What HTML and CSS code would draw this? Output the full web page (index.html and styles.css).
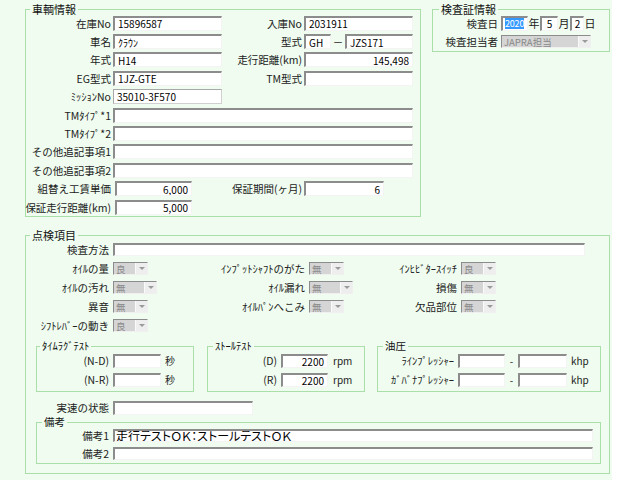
FILE: index.html
```html
<!DOCTYPE html>
<html lang="ja">
  <head>
    <meta charset="UTF-8" />
    <meta name="viewport" content="width=device-width, initial-scale=1.0" />
    <title>検査入力</title>
    <link rel="stylesheet" href="styles.css">
  </head>
  <body>
    <div class="form">
      <div class="top">
        <!-- 車輌情報 -->
        <fieldset class="grp car">
          <legend>車輌情報</legend>
          <div class="car-grid">
            <span class="lbl">在庫No</span><input class="txt" type="text" value="15896587" />
            <span class="lbl">入庫No</span><input class="txt" type="text" value="2031911" />

            <span class="lbl">車名</span><input class="txt" type="text" value="ｸﾗｳﾝ" />
            <span class="lbl">型式</span>
            <div class="pair">
              <input class="txt gh" type="text" value="GH" />
              <span class="dash">－</span>
              <input class="txt jzs" type="text" value="JZS171" />
            </div>

            <span class="lbl">年式</span><input class="txt" type="text" value="H14" />
            <span class="lbl">走行距離(km)</span><input class="txt num" type="text" value="145,498" />

            <span class="lbl">EG型式</span><input class="txt" type="text" value="1JZ-GTE" />
            <span class="lbl">TM型式</span><input class="txt" type="text" value="" />

            <span class="lbl">ﾐｯｼｮﾝNo</span><input class="txt flat" type="text" value="35010-3F570" />
            <span></span><span></span>

            <span class="lbl">TMﾀｲﾌﾟ*1</span><input class="txt wide" type="text" value="" />
            <span class="lbl">TMﾀｲﾌﾟ*2</span><input class="txt wide" type="text" value="" />
            <span class="lbl">その他追記事項1</span><input class="txt wide" type="text" value="" />
            <span class="lbl">その他追記事項2</span><input class="txt wide" type="text" value="" />

            <span class="lbl">組替え工賃単価</span><input class="txt num short" type="text" value="6,000" />
            <span class="lbl">保証期間(ヶ月)</span><input class="txt num period" type="text" value="6" />

            <span class="lbl">保証走行距離(km)</span><input class="txt num short" type="text" value="5,000" />
          </div>
        </fieldset>

        <!-- 検査証情報 -->
        <fieldset class="grp cert">
          <legend>検査証情報</legend>
          <div class="cert-grid">
            <span class="lbl">検査日</span>
            <div class="date">
              <div class="txt year"><span class="hl">2020</span></div>
              <span class="unit">年</span>
              <input class="txt month" type="text" value="5" />
              <span class="unit">月</span>
              <input class="txt day" type="text" value="2" />
              <span class="unit">日</span>
            </div>
            <span class="lbl">検査担当者</span>
            <div class="sel staff"><span class="val">JAPRA担当</span><span class="arr"></span></div>
          </div>
        </fieldset>
      </div>

      <!-- 点検項目 -->
      <fieldset class="grp check">
        <legend>点検項目</legend>
        <div class="method">
          <span class="lbl">検査方法</span><input class="txt thin" type="text" value="" />
        </div>

        <div class="checks">
          <span class="lbl">ｵｲﾙの量</span>
          <div class="cell"><div class="sel s35"><span class="val">良</span><span class="arr"></span></div></div>
          <span class="lbl">ｲﾝﾌﾟｯﾄｼｬﾌﾄのがた</span>
          <div class="cell"><div class="sel s35"><span class="val">無</span><span class="arr"></span></div></div>
          <span class="lbl">ｲﾝﾋﾋﾞﾀｰｽｲｯﾁ</span>
          <div class="cell"><div class="sel s35"><span class="val">良</span><span class="arr"></span></div></div>

          <span class="lbl">ｵｲﾙの汚れ</span>
          <div class="cell"><div class="sel s44"><span class="val">無</span><span class="arr"></span></div></div>
          <span class="lbl">ｵｲﾙ漏れ</span>
          <div class="cell"><div class="sel s44"><span class="val">無</span><span class="arr"></span></div></div>
          <span class="lbl">損傷</span>
          <div class="cell"><div class="sel s35"><span class="val">無</span><span class="arr"></span></div></div>

          <span class="lbl">異音</span>
          <div class="cell"><div class="sel s35"><span class="val">無</span><span class="arr"></span></div></div>
          <span class="lbl">ｵｲﾙﾊﾟﾝへこみ</span>
          <div class="cell"><div class="sel s35"><span class="val">無</span><span class="arr"></span></div></div>
          <span class="lbl">欠品部位</span>
          <div class="cell"><div class="sel s35"><span class="val">無</span><span class="arr"></span></div></div>

          <span class="lbl">ｼﾌﾄﾚﾊﾞｰの動き</span>
          <div class="cell"><div class="sel s35"><span class="val">良</span><span class="arr"></span></div></div>
        </div>

        <div class="tests">
          <fieldset class="grp sub lag">
            <legend>ﾀｲﾑﾗｸﾞﾃｽﾄ</legend>
            <div class="sub-grid lag-grid">
              <span class="lbl">(N-D)</span><input class="txt mid" type="text" value="" /><span class="unit-s">秒</span>
              <span class="lbl">(N-R)</span><input class="txt mid" type="text" value="" /><span class="unit-s">秒</span>
            </div>
          </fieldset>
          <fieldset class="grp sub stall">
            <legend>ｽﾄｰﾙﾃｽﾄ</legend>
            <div class="sub-grid stall-grid">
              <span class="lbl">(D)</span><input class="txt mid num" type="text" value="2200" /><span class="unit-s">rpm</span>
              <span class="lbl">(R)</span><input class="txt mid num" type="text" value="2200" /><span class="unit-s">rpm</span>
            </div>
          </fieldset>
          <fieldset class="grp sub oil">
            <legend>油圧</legend>
            <div class="sub-grid oil-grid">
              <span class="lbl">ﾗｲﾝﾌﾟﾚｯｼｬｰ</span><input class="txt mid" type="text" value="" /><span class="sep">-</span><input class="txt mid" type="text" value="" /><span class="unit-s">khp</span>
              <span class="lbl">ｶﾞﾊﾞﾅﾌﾟﾚｯｼｬｰ</span><input class="txt mid" type="text" value="" /><span class="sep">-</span><input class="txt mid" type="text" value="" /><span class="unit-s">khp</span>
            </div>
          </fieldset>
        </div>

        <div class="speed">
          <span class="lbl">実速の状態</span><input class="txt mid" type="text" value="" />
        </div>

        <fieldset class="grp sub note">
          <legend>備考</legend>
          <div class="note-grid">
            <span class="lbl">備考1</span><input class="txt thin memo" type="text" value="走行テストＯＫ：ストールテストＯＫ" />
            <span class="lbl">備考2</span><input class="txt thin" type="text" value="" />
          </div>
        </fieldset>
      </fieldset>
    </div>
  </body>
</html>
```

FILE: styles.css
```css
body {
  margin: 0;
  background-color: #ffffff;
  font-family: "Noto Sans CJK JP", "Liberation Sans", sans-serif;
  font-size: 10.5px;
  color: #222;
}
.form {
  width: 612px;
  height: 480px;
  box-sizing: border-box;
  padding-left: 25px;
  background-color: #effcef;
  overflow: hidden;
}
.top {
  display: flex;
  align-items: flex-start;
}

/* group boxes */
.grp {
  margin: 0;
  padding: 0;
  min-width: 0;
  box-sizing: border-box;
  border: 1px solid #aadfaa;
}
.grp legend {
  padding: 0 2px;
  margin-left: 4px;
  font-size: 11px;
  line-height: 10px;
  color: #111;
}
.car {
  margin-top: 4px;
  width: 396px;
}
.cert {
  margin-top: 4px;
  margin-left: 11px;
  width: 178px;
}
.cert legend {
  margin-left: 6px;
}
.check {
  margin-top: 13px;
  width: 585px;
  padding-bottom: 9px;
}

.lbl {
  display: flex;
  justify-content: flex-end;
  white-space: nowrap;
  padding-right: 1px;
  line-height: 13px;
}

/* text boxes */
.txt {
  box-sizing: border-box;
  width: 100%;
  height: 15px;
  margin: 0;
  padding: 0 3px;
  border-style: solid;
  border-width: 2px 1px 1px 2px;
  border-color: #8c8c8c #f4f4f4 #f4f4f4 #8c8c8c;
  background-color: #ffffff;
  font-family: "Noto Sans CJK JP", "Liberation Sans", sans-serif;
  font-size: 10px;
  color: #000;
  outline: none;
}
.num {
  text-align: right;
}
.flat {
  border-width: 1px;
  border-color: #a8a8a8 #d0d0d0 #d0d0d0 #a8a8a8;
}
.thin {
  height: 13px;
}
.mid {
  height: 14px;
}

/* 車輌情報 */
.car-grid {
  display: grid;
  grid-template-columns: 86px 109px 80px 109px;
  grid-auto-rows: 18.4px;
  column-gap: 1px;
  align-items: center;
}
.car-grid .wide {
  grid-column: 2 / 5;
}
.car-grid .short {
  width: 77px;
  margin-left: 2px;
}
.car-grid .period {
  width: 80px;
}
.pair {
  display: flex;
  align-items: center;
}
.pair .gh {
  width: 27px;
}
.pair .dash {
  width: 14px;
  text-align: center;
}
.pair .jzs {
  flex: 1;
}

/* 検査証情報 */
.cert-grid {
  display: grid;
  grid-template-columns: 66px auto;
  grid-auto-rows: 18.5px;
  column-gap: 2px;
  align-items: center;
}
.date {
  display: flex;
  align-items: center;
}
.date .year {
  width: 27px;
  display: flex;
  align-items: center;
  padding: 0 0 0 2px;
  overflow: hidden;
}
.hl {
  background-color: #3399ff;
  color: #ffffff;
  font-size: 9px;
  line-height: 11px;
  letter-spacing: -0.2px;
}
.date .month {
  width: 18px;
  text-align: center;
}
.date .day {
  width: 14px;
  text-align: center;
  padding: 0 2px;
}
.unit {
  width: 12px;
  text-align: center;
  font-size: 11px;
}
.staff {
  width: 90px;
  height: 14px;
}

/* combo boxes */
.sel {
  box-sizing: border-box;
  display: flex;
  align-items: stretch;
  height: 13px;
  border-style: solid;
  border-width: 1px;
  border-color: #8c8c8c #f0f0f0 #f0f0f0 #8c8c8c;
  background-color: #d5d5d5;
  color: #8a8a8a;
  font-size: 9.5px;
}
.sel .val {
  flex: 1;
  display: flex;
  align-items: center;
  padding-left: 2px;
  line-height: 10px;
  white-space: nowrap;
}
.sel .arr {
  width: 11px;
  display: flex;
  align-items: center;
  justify-content: center;
  background-color: #eeeeee;
  border-left: 1px solid #fafafa;
}
.sel .arr::before {
  content: "";
  border-left: 3px solid transparent;
  border-right: 3px solid transparent;
  border-top: 3px solid #9a9a9a;
}
.s35 {
  width: 35px;
}
.s44 {
  width: 44px;
}

/* 点検項目 */
.method {
  display: grid;
  grid-template-columns: 84px 472px;
  grid-auto-rows: 19px;
  column-gap: 3px;
  align-items: center;
}
.checks {
  display: grid;
  grid-template-columns: 84px 100px 90px 50px 96px 50px;
  grid-auto-rows: 19px;
  column-gap: 3px;
  align-items: center;
}
.cell {
  display: flex;
}

.tests {
  display: flex;
  margin-top: 6px;
  margin-left: 10px;
}
.sub {
  padding-bottom: 2px;
}
.sub legend {
  font-size: 10.5px;
  margin-left: 3px;
}
.lag {
  width: 158px;
}
.stall {
  width: 158px;
  margin-left: 13px;
}
.oil {
  width: 224px;
  margin-left: 12px;
}
.stall legend,
.oil legend {
  margin-left: 5px;
}
.sub-grid {
  display: grid;
  grid-auto-rows: 19px;
  column-gap: 3px;
  align-items: center;
}
.lag-grid {
  grid-template-columns: 73px 48px auto;
}
.stall-grid {
  grid-template-columns: 70px 47px auto;
}
.oil-grid {
  grid-template-columns: 77px 47px 7px 49px auto;
}
.unit-s {
  font-size: 10px;
  padding-left: 1px;
}
.stall-grid .unit-s {
  padding-left: 2px;
}
.sep {
  text-align: center;
  font-size: 10px;
}

.speed {
  display: grid;
  grid-template-columns: 84px 140px;
  grid-auto-rows: 19px;
  column-gap: 3px;
  align-items: center;
  margin-top: 6px;
}

.note {
  width: 565px;
  margin-left: 10px;
  margin-top: 1px;
  padding-bottom: 1px;
}
.note legend {
  line-height: 8px;
  margin-left: 5px;
}
.note-grid {
  display: grid;
  grid-template-columns: 73px 480px;
  grid-auto-rows: 18px;
  column-gap: 3px;
  align-items: center;
}
.memo {
  font-size: 12px;
  font-feature-settings: "palt";
  padding-left: 1px;
}
```
